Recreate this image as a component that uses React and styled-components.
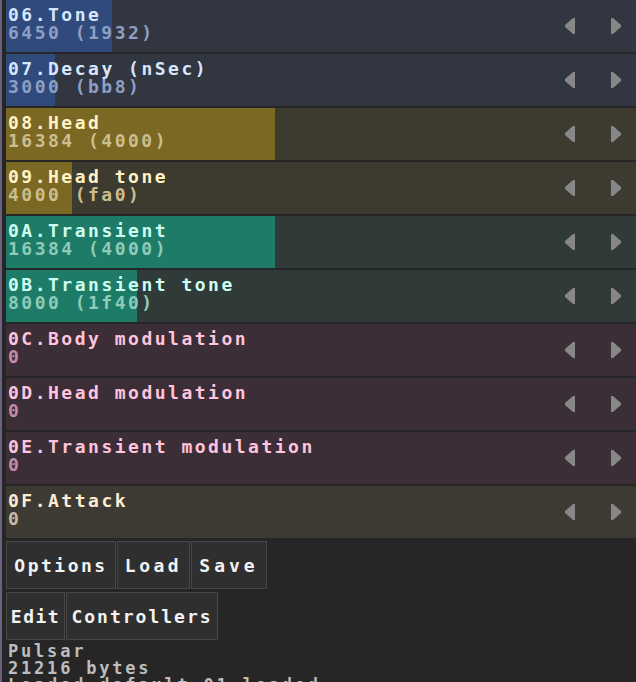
import React from "react";
import styled, { createGlobalStyle } from "styled-components";

const GlobalStyle = createGlobalStyle`
    html, body {
        margin: 0;
        padding: 0;
        background: #262626;
        overflow: hidden;
    }
    body {
        font-family: "DejaVu Sans Mono", "Liberation Mono", monospace;
    }
`;

const themes = {
    blue: { bg: "#323641", bar: "#2f4a7b", title: "#d6e6ff", value: "#8e9fc4" },
    gold: { bg: "#3d3a2f", bar: "#7b6823", title: "#fff4c6", value: "#cbbe8e" },
    teal: { bg: "#2f3a39", bar: "#1e7b68", title: "#ccfff1", value: "#8ecbba" },
    pink: { bg: "#3c2e36", bar: "#7b3a5a", title: "#ffc4de", value: "#c38ca4" },
    sand: { bg: "#3d3a34", bar: "#7b6a4a", title: "#ffebd2", value: "#cbb99f" },
};

const BAR_MAX = 538;

const Page = styled.div`
    height: 682px;
    overflow: hidden;
    border-left: 2px solid #6d6180;
    padding-left: 4px;
    box-sizing: border-box;
    background: #262626;
`;

const List = styled.div`
    display: flex;
    flex-direction: column;
    gap: 2px;
`;

const Row = styled.div`
    display: flex;
    height: 52px;
    background: ${(p) => p.$t.bg};
`;

const Slider = styled.div`
    width: ${BAR_MAX}px;
    flex: none;
    box-sizing: border-box;
    padding: 6px 0 0 2px;
    background: linear-gradient(
        to right,
        ${(p) => p.$t.bar} ${(p) => p.$fill}px,
        transparent ${(p) => p.$fill}px
    );
`;

const Title = styled.div`
    font-size: 18px;
    font-weight: bold;
    letter-spacing: 2.5px;
    line-height: 18px;
    color: ${(p) => p.$t.title};
    white-space: nowrap;
`;

const Value = styled(Title)`
    color: ${(p) => p.$t.value};
`;

const Arrow = styled.div`
    width: 46px;
    flex: none;
    box-sizing: border-box;
    padding-left: 6px;
    display: flex;
    align-items: center;
    justify-content: center;
    svg {
        display: block;
    }
`;

const Buttons = styled.div`
    display: flex;
    gap: 1px;
    margin-top: 3px;
`;

const Button = styled.div`
    width: ${(p) => p.$w}px;
    height: 48px;
    box-sizing: border-box;
    display: flex;
    align-items: center;
    justify-content: center;
    background: #2f2f2f;
    border: 1px solid #474747;
    color: #f2f2f2;
    font-size: 18px;
    font-weight: bold;
    letter-spacing: ${(p) => p.$ls || 2.5}px;
    white-space: nowrap;
`;

const Info = styled.div`
    margin-top: 3px;
    padding-left: 2px;
    color: #bdbdbd;
    font-size: 17px;
    font-weight: bold;
    letter-spacing: 2.8px;
    line-height: 17px;
`;

const LeftIcon = () => (
    <svg width="11" height="16" viewBox="0 0 11 16">
        <polygon points="10,0 10,16 8,16 0,9 0,7 8,0" fill="#878787" />
    </svg>
);

const RightIcon = () => (
    <svg width="11" height="16" viewBox="0 0 11 16">
        <polygon points="0,0 0,16 2,16 10,9 10,7 2,0" fill="#878787" />
    </svg>
);

const params = [
    { id: "06", name: "Tone", value: 6450, hex: "1932", t: "blue" },
    { id: "07", name: "Decay (nSec)", value: 3000, hex: "bb8", t: "blue" },
    { id: "08", name: "Head", value: 16384, hex: "4000", t: "gold" },
    { id: "09", name: "Head tone", value: 4000, hex: "fa0", t: "gold" },
    { id: "0A", name: "Transient", value: 16384, hex: "4000", t: "teal" },
    { id: "0B", name: "Transient tone", value: 8000, hex: "1f40", t: "teal" },
    { id: "0C", name: "Body modulation", value: 0, t: "pink" },
    { id: "0D", name: "Head modulation", value: 0, t: "pink" },
    { id: "0E", name: "Transient modulation", value: 0, t: "pink" },
    { id: "0F", name: "Attack", value: 0, t: "sand" },
];

const ParamRow = ({ p }) => {
    const t = themes[p.t];
    const fill = Math.round((p.value / 32768) * BAR_MAX);
    return (
        <Row $t={t}>
            <Slider $t={t} $fill={fill}>
                <Title $t={t}>
                    {p.id}.{p.name}
                </Title>
                <Value $t={t}>{p.hex ? `${p.value} (${p.hex})` : p.value}</Value>
            </Slider>
            <Arrow>
                <LeftIcon />
            </Arrow>
            <Arrow>
                <RightIcon />
            </Arrow>
        </Row>
    );
};

export default function App() {
    return (
        <Page>
            <GlobalStyle />
            <List>
                {params.map((p) => (
                    <ParamRow key={p.id} p={p} />
                ))}
            </List>
            <Buttons>
                <Button $w={110}>Options</Button>
                <Button $w={73} $ls={3.5}>Load</Button>
                <Button $w={76} $ls={4}>Save</Button>
            </Buttons>
            <Buttons>
                <Button $w={59} $ls={1.5}>Edit</Button>
                <Button $w={152} $ls={2}>Controllers</Button>
            </Buttons>
            <Info>
                <div>Pulsar</div>
                <div>21216 bytes</div>
                <div>Loaded default 01 loaded</div>
            </Info>
        </Page>
    );
}
